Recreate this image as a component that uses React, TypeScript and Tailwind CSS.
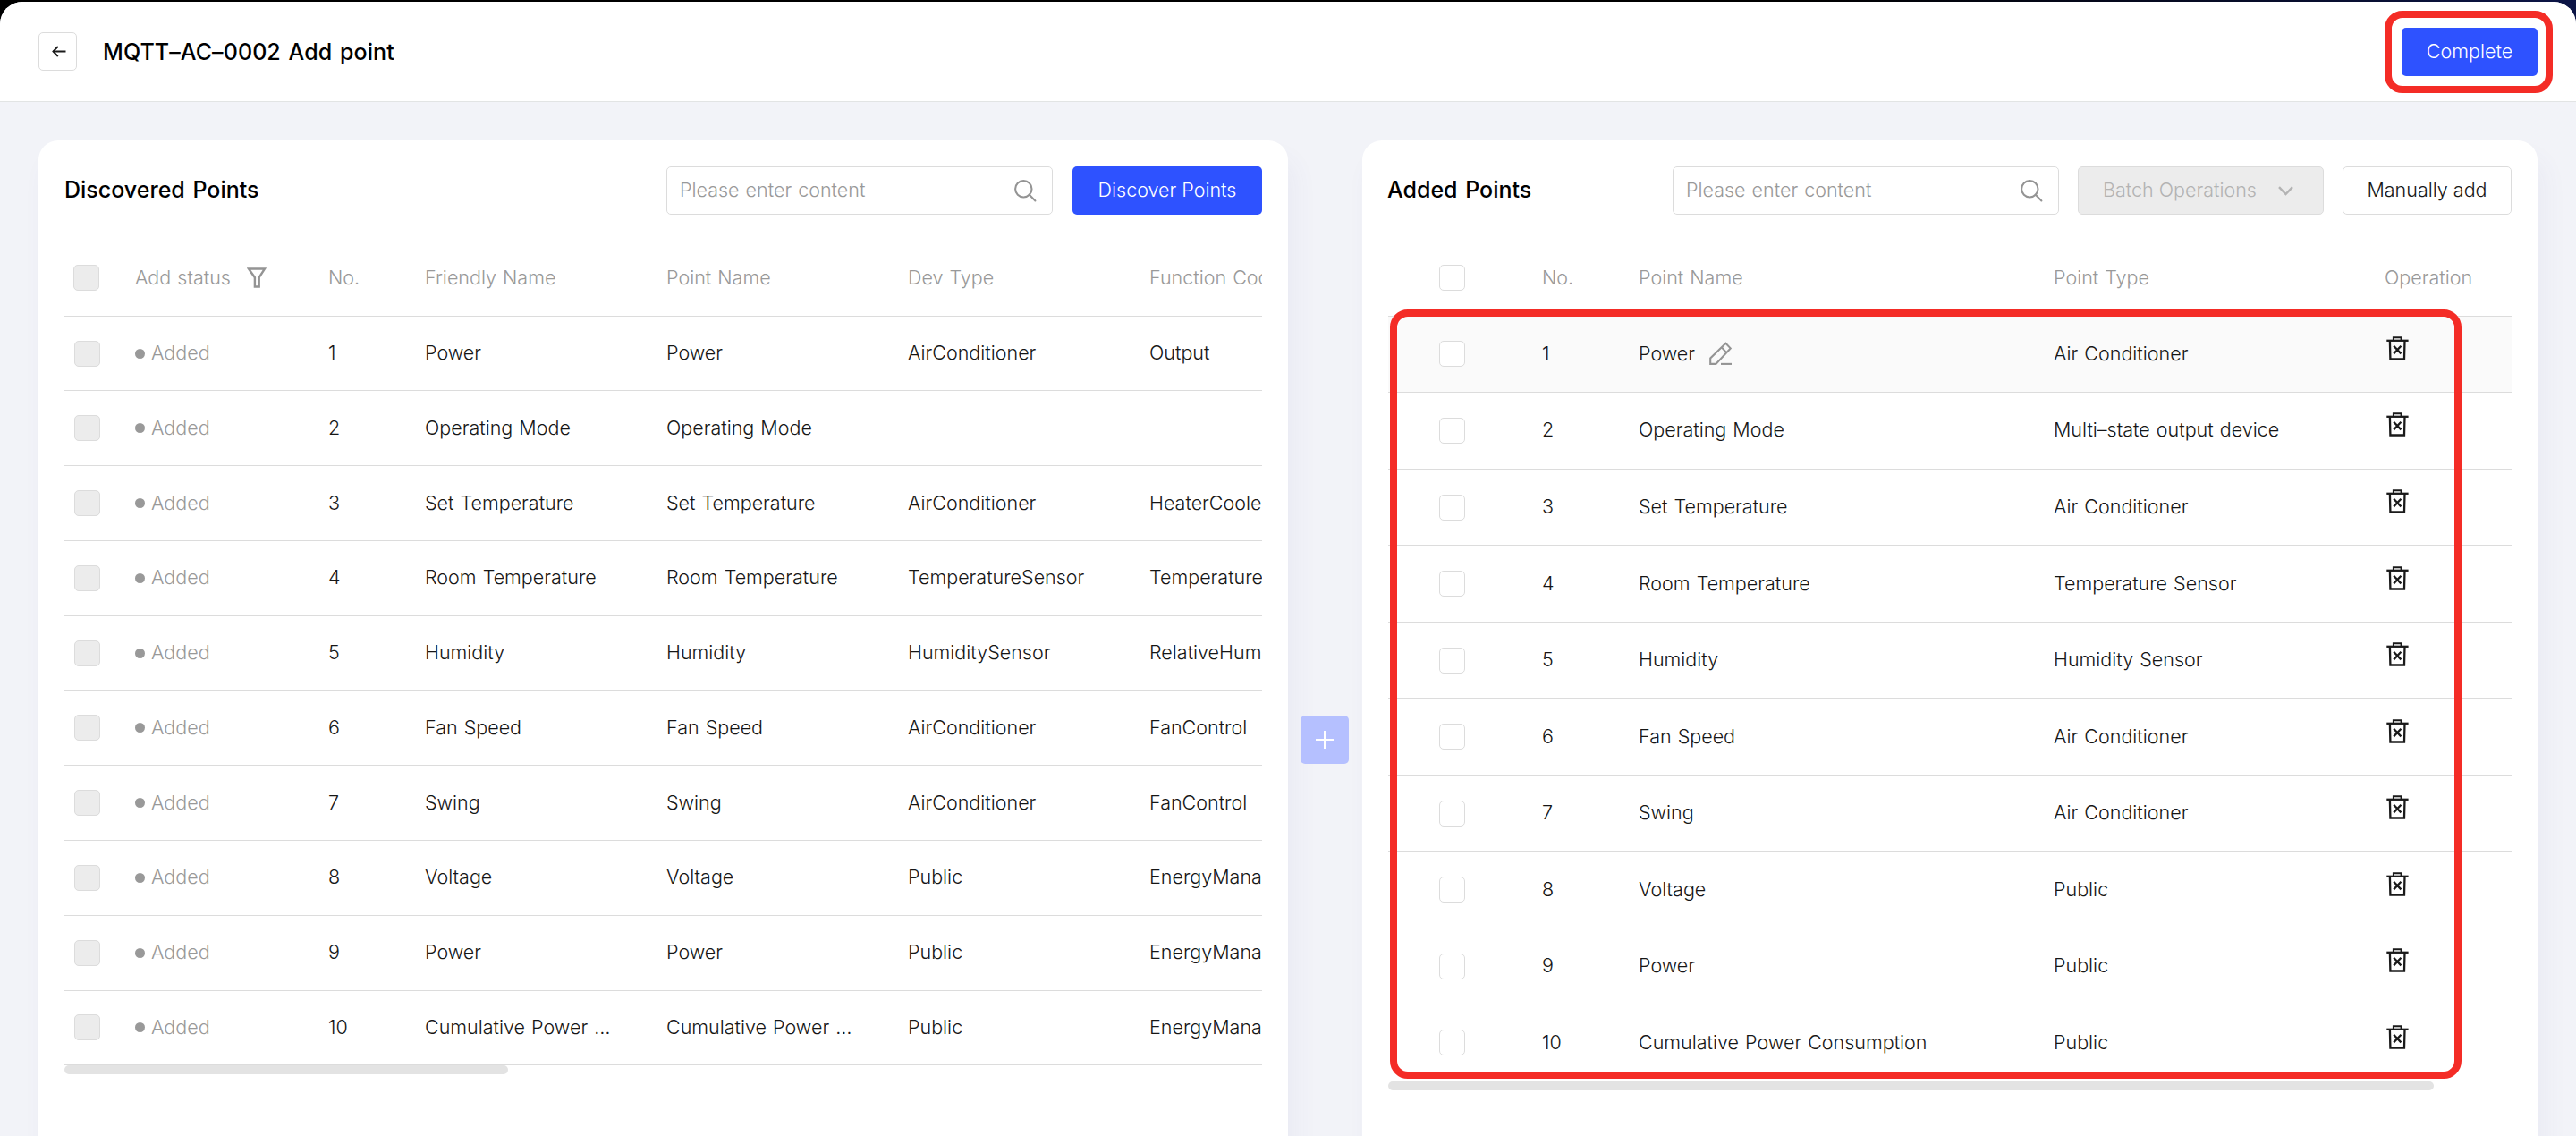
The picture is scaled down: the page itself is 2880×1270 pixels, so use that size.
import type { ReactNode } from "react";

type Discovered = { name: string; type: string; code: string };
type Added = { name: string; type: string };

const discovered: Discovered[] = [
  { name: "Power", type: "AirConditioner", code: "Output" },
  { name: "Operating Mode", type: "", code: "" },
  { name: "Set Temperature", type: "AirConditioner", code: "HeaterCooler" },
  { name: "Room Temperature", type: "TemperatureSensor", code: "Temperature" },
  { name: "Humidity", type: "HumiditySensor", code: "RelativeHumidity" },
  { name: "Fan Speed", type: "AirConditioner", code: "FanControl" },
  { name: "Swing", type: "AirConditioner", code: "FanControl" },
  { name: "Voltage", type: "Public", code: "EnergyManagement" },
  { name: "Power", type: "Public", code: "EnergyManagement" },
  { name: "Cumulative Power …", type: "Public", code: "EnergyManagement" },
];

const added: Added[] = [
  { name: "Power", type: "Air Conditioner" },
  { name: "Operating Mode", type: "Multi–state output device" },
  { name: "Set Temperature", type: "Air Conditioner" },
  { name: "Room Temperature", type: "Temperature Sensor" },
  { name: "Humidity", type: "Humidity Sensor" },
  { name: "Fan Speed", type: "Air Conditioner" },
  { name: "Swing", type: "Air Conditioner" },
  { name: "Voltage", type: "Public" },
  { name: "Power", type: "Public" },
  { name: "Cumulative Power Consumption", type: "Public" },
];

function SearchIcon() {
  return (
    <svg width="25" height="25" viewBox="0 0 25 25" fill="none" stroke="#949494" strokeWidth="2.1" strokeLinecap="round">
      <circle cx="10.3" cy="10.3" r="9.2" />
      <path d="M16.6 16.6L23.4 23.4" />
    </svg>
  );
}

function FilterIcon() {
  return (
    <svg width="22" height="23" viewBox="0 0 22 23" fill="none" stroke="#949494" strokeWidth="2.4">
      <path d="M2 1.5H20L13.7 11.2V21.5H8.9V11.2Z" />
    </svg>
  );
}

function PencilIcon() {
  return (
    <svg width="26" height="27" viewBox="0 0 26 27" fill="none" stroke="#949494" strokeWidth="2.1">
      <path d="M1.2 24.9V18.4L18.4 1.8L23.7 7.4L7.4 24.9Z" />
      <path d="M13.8 6.3L18.9 11.9" />
      <path d="M13 24.9H25" />
    </svg>
  );
}

function TrashIcon() {
  return (
    <svg width="26" height="28" viewBox="0 0 26 28" fill="none" stroke="#1a1a1a" strokeWidth="2.3">
      <path d="M0.3 4.8H24.6" />
      <path d="M7.9 4.8V1.3H16.6V4.8" strokeWidth="2" />
      <path d="M3.9 5L4.4 25.5H20L20.5 5" />
      <path d="M8.2 10.8L16.4 19.4M16.4 10.8L8.2 19.4" />
    </svg>
  );
}

function Checkbox({ disabled = false }: { disabled?: boolean }) {
  return (
    <div
      className={
        disabled
          ? "size-[29px] rounded-[5px] border border-[#dcdcdc] bg-[#ececec]"
          : "size-[29px] rounded-[5px] border border-[#dcdcdc] bg-white"
      }
    />
  );
}

function SearchBox() {
  return (
    <div className="flex h-[54px] w-[432px] items-center justify-between rounded-[5px] border border-[#dcdcdc] bg-white pr-[17px] pl-[14px] text-[#999]">
      <span className="pb-[2px]">Please enter content</span>
      <SearchIcon />
    </div>
  );
}

function Card({ className, children }: { className: string; children: ReactNode }) {
  return (
    <section
      className={`flex h-[1200px] shrink-0 flex-col rounded-[22px] bg-white px-[29px] pt-[29px] shadow-[8px_20px_28px_rgba(70,85,160,0.05)] ${className}`}
    >
      {children}
    </section>
  );
}

const leftGrid =
  "grid w-[1454px] grid-cols-[50px_216px_108px_270px_270px_270px_270px] items-center border-b border-[#dcdcdc] [&_span]:pb-[2px]";
const rightGrid = "grid grid-cols-[172px_108px_464px_370px_142px] items-center border-b border-[#dcdcdc] [&_span]:pb-[2px]";

export default function App() {
  return (
    <div className="h-[1270px] w-[2880px] overflow-hidden bg-[linear-gradient(90deg,#000_0%,#000_70%,#0c1546_100%)] pt-[2px] font-['Inter','Noto_Sans_CJK_SC',sans-serif] text-[21.5px] leading-[30px] font-[360] whitespace-nowrap text-[#161616] [word-spacing:1px]">
      <div className="h-[1268px] overflow-hidden rounded-t-[25px] bg-[#f2f3f8]">
        <header className="flex h-[112px] items-center border-b border-[#e2e4e4] bg-white pr-[43px] pl-[43px]">
          <button className="flex size-[43px] items-center justify-center rounded-[5px] border border-[#dcdcdc]">
            <svg width="16" height="13" viewBox="0 0 16 13" fill="none" stroke="#1a1a1a" strokeWidth="1.8" className="ml-[2px]">
              <path d="M1.5 6.5H15.5" />
              <path d="M6.8 1L1.4 6.5L6.8 12" />
            </svg>
          </button>
          <h1 className="ml-[29px] text-[25px] font-medium tracking-[0.08px] text-black [word-spacing:2px]">MQTT–AC–0002 Add point</h1>
          <div className="relative ml-auto">
            <button className="flex h-[54px] w-[152px] items-center justify-center rounded-[5px] bg-[#2e52ff] pb-[2px] text-white">Complete</button>
            <div className="pointer-events-none absolute -top-[19px] -left-[19px] h-[92px] w-[188px] rounded-[20px] border-[8px] border-[#f42c26]" />
          </div>
        </header>

        <main className="flex px-[43px] pt-[43px]">
          <Card className="w-[1397px]">
            <div className="flex h-[54px] items-center">
              <h2 className="pb-[2px] text-[25px] font-medium text-black [word-spacing:2px]">Discovered Points</h2>
              <div className="ml-auto flex gap-[22px]">
                <SearchBox />
                <button className="flex h-[54px] w-[212px] items-center justify-center rounded-[5px] bg-[#2e52ff] pb-[2px] text-white">
                  Discover Points
                </button>
              </div>
            </div>
            <div className="mt-[29px] w-[1339px] overflow-hidden">
              <div className={`${leftGrid} h-[84.65px] text-[#999]`}>
                <div className="pl-[10px]">
                  <Checkbox disabled />
                </div>
                <div className="flex items-center gap-[18px] pl-[29px]">
                  <span>Add status</span>
                  <FilterIcon />
                </div>
                <span className="pl-[29px]">No.</span>
                <span className="pl-[29px]">Friendly Name</span>
                <span className="pl-[29px]">Point Name</span>
                <span className="pl-[29px]">Dev Type</span>
                <span className="pl-[29px]">Function Code</span>
              </div>
              {discovered.map((row, i) => (
                <div key={i} className={`${leftGrid} h-[83.77px]`}>
                  <div className="pl-[11px]">
                    <Checkbox disabled />
                  </div>
                  <div className="flex items-center pl-[29px] text-[#999]">
                    <div className="mr-[7px] size-[11px] rounded-full bg-[#999]" />
                    <span>Added</span>
                  </div>
                  <span className="pl-[29px]">{i + 1}</span>
                  <span className="pl-[29px]">{row.name}</span>
                  <span className="pl-[29px]">{row.name}</span>
                  <span className="pl-[29px]">{row.type}</span>
                  <span className="pl-[29px]">{row.code}</span>
                </div>
              ))}
              <div className="h-[10px] w-[496px] rounded-full bg-[#e3e3e3]" />
            </div>
          </Card>

          <div className="w-[83px] shrink-0 pt-[643px] pl-[14px]">
            <button className="flex size-[54px] items-center justify-center rounded-[5px] bg-[#b5c0ff]">
              <svg width="20" height="20" viewBox="0 0 20 20" stroke="#fff" strokeWidth="2">
                <path d="M10 0V20M0 10H20" />
              </svg>
            </button>
          </div>

          <Card className="w-[1314px]">
            <div className="flex h-[54px] items-center">
              <h2 className="-ml-[1px] pb-[2px] text-[25px] font-medium text-black [word-spacing:2px]">Added Points</h2>
              <div className="ml-auto flex gap-[21px]">
                <SearchBox />
                <button className="flex h-[54px] w-[275px] items-center rounded-[5px] border border-[#dcdcdc] bg-[#ececec] pl-[27px] text-[#b3b3b3]">
                  <span className="w-[196px] pb-[2px] text-left">Batch Operations</span>
                  <svg width="17" height="11" viewBox="0 0 17 11" fill="none" stroke="#b3b3b3" strokeWidth="2.4">
                    <path d="M1 1.2L8.5 9L16 1.2" />
                  </svg>
                </button>
                <button className="flex h-[54px] w-[189px] items-center justify-center rounded-[5px] border border-[#dcdcdc] bg-white pb-[2px]">
                  Manually add
                </button>
              </div>
            </div>
            <div className="relative mt-[29px] w-[1256px]">
              <div className={`${rightGrid} h-[84.65px] text-[#999]`}>
                <div className="pl-[57px]">
                  <Checkbox />
                </div>
                <span>No.</span>
                <span>Point Name</span>
                <span>Point Type</span>
                <span>Operation</span>
              </div>
              {added.map((row, i) => (
                <div key={i} className={`${rightGrid} h-[85.56px] ${i === 0 ? "bg-[#fafafa]" : "bg-white"}`}>
                  <div className="pl-[57px]">
                    <Checkbox />
                  </div>
                  <span>{i + 1}</span>
                  <div className="flex items-center gap-[16px]">
                    <span>{row.name}</span>
                    {i === 0 && <PencilIcon />}
                  </div>
                  <span>{row.type}</span>
                  <div className="pb-[12px] pl-[2px]">
                    <TrashIcon />
                  </div>
                </div>
              ))}
              <div className="h-[10px] w-[1169px] rounded-full bg-[#e3e3e3]" />
              <div className="pointer-events-none absolute top-[77px] left-[2px] h-[860px] w-[1198px] rounded-[20px] border-[8px] border-[#f42c26]" />
            </div>
          </Card>
        </main>
      </div>
    </div>
  );
}
